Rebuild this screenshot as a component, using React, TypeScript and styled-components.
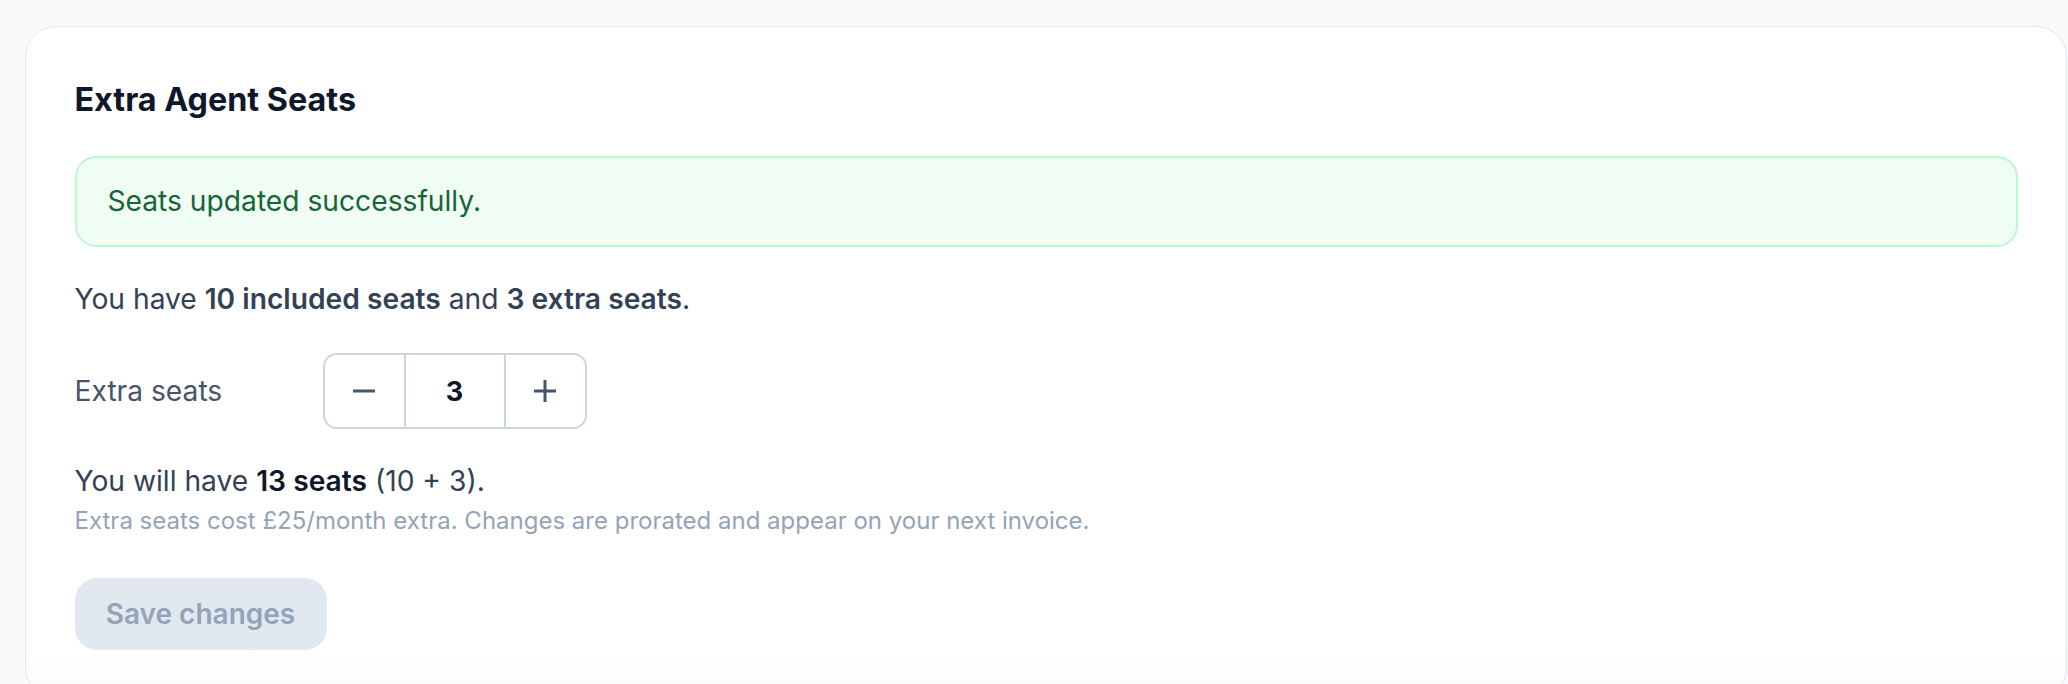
import * as React from 'react'
import styled, { createGlobalStyle } from 'styled-components'

const GlobalStyle = createGlobalStyle`
  html, body {
    margin: 0;
    padding: 0;
    background: #f8fafc;
    font-family: Inter, "Noto Sans", "Liberation Sans", sans-serif;
    -webkit-font-smoothing: antialiased;
  }
`

const Page = styled.div`
  padding: 26px 1px 0 25px;
  height: 684px;
  box-sizing: border-box;
  overflow: hidden;
`

const Card = styled.section`
  background: linear-gradient(to bottom, #ffffff 0, #ffffff 620px, #fcfcfd 660px);
  border: 1.5px solid #e2e8f0;
  border-radius: 31px;
  padding: 54px 48px 48px 48.5px;
  display: flex;
  flex-direction: column;
  align-items: flex-start;
`

const Title = styled.h2`
  margin: 0;
  font-size: 32.3px;
  line-height: 38px;
  font-weight: 700;
  color: #0f172a;
`

const Alert = styled.div`
  align-self: stretch;
  margin-top: 37px;
  background: #f0fdf4;
  border: 2px solid #bbf7d0;
  border-radius: 21px;
  padding: 23px 31px;
  font-size: 28.2px;
  line-height: 41px;
  color: #166534;
`

const Text = styled.p<{ $gap?: number }>`
  margin: ${(p) => p.$gap ?? 0}px 0 0;
  font-size: 28.2px;
  line-height: 40px;
  color: #334155;
`

const Strong = styled.strong<{ $dark?: boolean }>`
  font-weight: 600;
  color: ${(p) => (p.$dark ? '#0f172a' : '#334155')};
`

const FieldRow = styled.div`
  margin-top: 34px;
  display: flex;
  align-items: center;
`

const Label = styled.span`
  width: 248px;
  font-size: 28.2px;
  line-height: 40px;
  color: #475569;
`

const Stepper = styled.div`
  display: flex;
  height: 76px;
  border: 2px solid #cbd5e1;
  border-radius: 14px;
  overflow: hidden;
  box-sizing: border-box;
`

const StepButton = styled.button`
  width: 79px;
  border: none;
  background: #ffffff;
  color: #475569;
  display: flex;
  align-items: center;
  justify-content: center;
  padding: 0;
  cursor: pointer;
`

const Value = styled.div`
  width: 102px;
  box-sizing: border-box;
  border-left: 2px solid #cbd5e1;
  border-right: 2px solid #cbd5e1;
  display: flex;
  align-items: center;
  justify-content: center;
  font-size: 27px;
  font-weight: 700;
  color: #0f172a;
`

const Note = styled.p`
  margin: 3px 0 0;
  font-size: 24px;
  line-height: 34px;
  color: #94a3b8;
`

const SaveButton = styled.button`
  margin-top: 40px;
  width: 252px;
  height: 72px;
  border: none;
  border-radius: 22px;
  background: #e2e8f0;
  color: #94a3b8;
  font-family: inherit;
  font-size: 28px;
  font-weight: 600;
  cursor: not-allowed;
`

const MinusIcon = () => (
  <svg width="24" height="24" viewBox="0 0 24 24" fill="none" stroke="currentColor" strokeWidth="3">
    <path d="M1 12h22" />
  </svg>
)

const PlusIcon = () => (
  <svg width="24" height="24" viewBox="0 0 24 24" fill="none" stroke="currentColor" strokeWidth="3">
    <path d="M1 12h22M12 1v22" />
  </svg>
)

export default function App() {
  const included = 10
  const [extra, setExtra] = React.useState(3)

  return (
    <Page>
      <GlobalStyle />
      <Card>
        <Title>Extra Agent Seats</Title>
        <Alert>Seats updated successfully.</Alert>
        <Text $gap={32}>
          You have <Strong>{included} included seats</Strong> and <Strong>{extra} extra seats</Strong>.
        </Text>
        <FieldRow>
          <Label>Extra seats</Label>
          <Stepper>
            <StepButton aria-label="Decrease" onClick={() => setExtra(Math.max(0, extra - 1))}>
              <MinusIcon />
            </StepButton>
            <Value>{extra}</Value>
            <StepButton aria-label="Increase" onClick={() => setExtra(extra + 1)}>
              <PlusIcon />
            </StepButton>
          </Stepper>
        </FieldRow>
        <Text $gap={32}>
          You will have <Strong $dark>{included + extra} seats</Strong> ({included} + {extra}).
        </Text>
        <Note>Extra seats cost £25/month extra. Changes are prorated and appear on your next invoice.</Note>
        <SaveButton disabled>Save changes</SaveButton>
      </Card>
    </Page>
  )
}
